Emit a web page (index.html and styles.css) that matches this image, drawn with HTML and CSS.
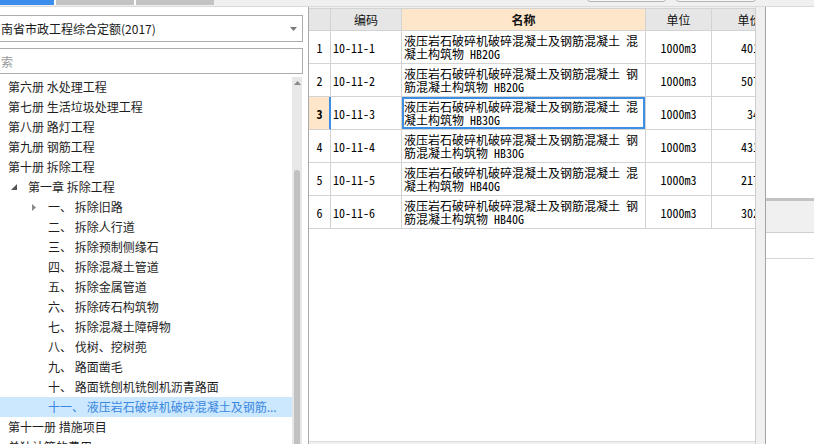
FILE: index.html
```html
<!DOCTYPE html>
<html lang="zh-CN">
<head>
<meta charset="utf-8">
<title>定额</title>
<link rel="stylesheet" href="styles.css">
</head>
<body>
<div class="topbar">
  <div class="tab tab-active"></div>
  <div class="tab-gap"></div>
  <div class="tab"></div>
  <div class="tab-gap"></div>
  <div class="tab"></div>
  <div class="top-btn top-btn-1"></div>
  <div class="top-btn top-btn-2"></div>
</div>
<div class="main">
  <div class="left">
    <div class="combo">
      <span class="combo-text">南省市政工程综合定额(2017)</span>
      <svg class="combo-arrow" width="7" height="4" viewBox="0 0 7 4"><path d="M0 0H7L3.5 4Z" fill="#7a7a7a"/></svg>
    </div>
    <div class="search"><span class="placeholder">索</span></div>
    <div class="tree">
      <div class="rows">
        <div class="row lv0">第六册 水处理工程</div>
        <div class="row lv0">第七册 生活垃圾处理工程</div>
        <div class="row lv0">第八册 路灯工程</div>
        <div class="row lv0">第九册 钢筋工程</div>
        <div class="row lv0">第十册 拆除工程</div>
        <div class="row lv1"><span class="ico"><svg width="6" height="6" viewBox="0 0 6 6"><path d="M6 0V6H0Z" fill="#555"/></svg></span>第一章 拆除工程</div>
        <div class="row lv2x"><span class="ico"><svg width="4" height="7" viewBox="0 0 4 7"><path d="M0 0L4 3.5L0 7Z" fill="#8a8a8a"/></svg></span>一、 拆除旧路</div>
        <div class="row lv2">二、 拆除人行道</div>
        <div class="row lv2">三、 拆除预制侧缘石</div>
        <div class="row lv2">四、 拆除混凝土管道</div>
        <div class="row lv2">五、 拆除金属管道</div>
        <div class="row lv2">六、 拆除砖石构筑物</div>
        <div class="row lv2">七、 拆除混凝土障碍物</div>
        <div class="row lv2">八、 伐树、挖树蔸</div>
        <div class="row lv2">九、 路面凿毛</div>
        <div class="row lv2">十、 路面铣刨机铣刨机沥青路面</div>
        <div class="row lv2 selected">十一、 液压岩石破碎机破碎混凝土及钢筋...</div>
        <div class="row lv0">第十一册 措施项目</div>
        <div class="row lv0">单独计算的费用</div>
      </div>
      <div class="vscroll">
        <div class="vs-arrow"><svg width="7" height="4" viewBox="0 0 7 4"><path d="M0 4H7L3.5 0Z" fill="#8a8a8a"/></svg></div>
        <div class="vs-thumb"></div>
      </div>
    </div>
  </div>
  <div class="grid">
    <div class="table">
      <div class="trow thead">
        <div class="cell rn"></div>
        <div class="cell c">编码</div>
        <div class="cell c name-h">名称</div>
        <div class="cell c">单位</div>
        <div class="cell c">单价</div>
      </div>
      <div class="trow">
        <div class="cell rn">1</div>
        <div class="cell code">10-11-1</div>
        <div class="cell name">液压岩石破碎机破碎混凝土及钢筋混凝土 混<br>凝土构筑物 HB20G</div>
        <div class="cell unit">1000m3</div>
        <div class="cell price">4013.52</div>
      </div>
      <div class="trow">
        <div class="cell rn">2</div>
        <div class="cell code">10-11-2</div>
        <div class="cell name">液压岩石破碎机破碎混凝土及钢筋混凝土 钢<br>筋混凝土构筑物 HB20G</div>
        <div class="cell unit">1000m3</div>
        <div class="cell price">5078.64</div>
      </div>
      <div class="trow current">
        <div class="cell rn">3</div>
        <div class="cell code">10-11-3</div>
        <div class="cell name focus">液压岩石破碎机破碎混凝土及钢筋混凝土 混<br>凝土构筑物 HB30G</div>
        <div class="cell unit">1000m3</div>
        <div class="cell price">347.21</div>
      </div>
      <div class="trow">
        <div class="cell rn">4</div>
        <div class="cell code">10-11-4</div>
        <div class="cell name">液压岩石破碎机破碎混凝土及钢筋混凝土 钢<br>筋混凝土构筑物 HB30G</div>
        <div class="cell unit">1000m3</div>
        <div class="cell price">4316.05</div>
      </div>
      <div class="trow">
        <div class="cell rn">5</div>
        <div class="cell code">10-11-5</div>
        <div class="cell name">液压岩石破碎机破碎混凝土及钢筋混凝土 混<br>凝土构筑物 HB40G</div>
        <div class="cell unit">1000m3</div>
        <div class="cell price">2174.38</div>
      </div>
      <div class="trow">
        <div class="cell rn">6</div>
        <div class="cell code">10-11-6</div>
        <div class="cell name">液压岩石破碎机破碎混凝土及钢筋混凝土 钢<br>筋混凝土构筑物 HB40G</div>
        <div class="cell unit">1000m3</div>
        <div class="cell price">3025.97</div>
      </div>
    </div>
    <div class="hscroll"></div>
  </div>
  <div class="gutter"></div>
  <div class="right">
    <div class="right-top"></div>
    <div class="right-bar"></div>
    <div class="right-band"></div>
    <div class="right-band2"></div>
    <div class="right-rest"></div>
  </div>
</div>
</body>
</html>
```
FILE: styles.css
```css
* { box-sizing: border-box; margin: 0; padding: 0; }
html, body { width: 814px; height: 444px; overflow: hidden; }
body {
  background: #f0f0f0;
  font-family: "Noto Sans CJK SC", "Microsoft YaHei", sans-serif;
  font-size: 12px;
  color: #1e1e1e;
}

/* top strip */
.topbar {
  height: 7px;
  display: flex;
  align-items: flex-start;
  background: #f0f0f0;
  border-bottom: 1px solid #dadada;
}
.tab { width: 78px; height: 5px; background: #c3c3c3; }
.tab-active { width: 54px; background: #3c8eec; }
.tab-gap { width: 2px; height: 5px; background: #fff; }
.top-btn {
  height: 6px;
  margin-top: -4px;
  border: 1px solid #b4b4b4;
  border-radius: 3px;
  background: #f7f7f7;
}
.top-btn-1 { width: 79px; margin-left: 373px; }
.top-btn-2 { width: 80px; margin-left: 10px; }

.main { display: flex; height: 437px; }

/* left panel */
.left {
  width: 308px;
  background: #fff;
  display: flex;
  flex-direction: column;
  overflow: hidden;
}
.combo {
  margin: 8px 0 0 -1px;
  width: 304px;
  height: 27px;
  border: 1px solid #acacac;
  display: flex;
  align-items: center;
  justify-content: space-between;
  padding: 0 5px 0 1px;
}
.combo-text { color: #1a1a1a; font-size: 12px; }
.search {
  margin: 6px 0 0 -1px;
  width: 304px;
  height: 26px;
  border: 1px solid #acacac;
  display: flex;
  align-items: center;
  padding-left: 1px;
}
.placeholder { color: #9a9a9a; }

.tree { margin-top: 3px; flex: 1; display: flex; min-height: 0; }
.rows { width: 292px; overflow: hidden; }
.row {
  height: 20px;
  line-height: 20px;
  white-space: nowrap;
  display: flex;
  align-items: center;
  color: #1e1e1e;
}
.lv0 { padding-left: 8px; }
.lv1 { padding-left: 11px; }
.lv2x { padding-left: 32px; }
.lv2 { padding-left: 48px; }
.lv1 .ico { width: 17px; display: flex; align-items: center; }
.lv2x .ico { width: 16px; display: flex; align-items: center; }
.selected { background: #cce8ff; color: #3a87e0; }

.vscroll {
  width: 10px;
  background: #e8e8e8;
  display: flex;
  flex-direction: column;
  align-items: center;
}
.vs-arrow { height: 12px; display: flex; align-items: center; justify-content: center; }
.vs-thumb {
  margin-top: 81px;
  flex: 1;
  width: 6px;
  background: #c1c1c1;
  border-radius: 3px 3px 0 0;
}

/* grid */
.grid {
  width: 448px;
  border-left: 1px solid #a9a9a9;
  border-right: 1px solid #cfcfcf;
  display: flex;
  flex-direction: column;
  padding-top: 1px;
  background: #f0f0f0;
}
.table { flex: 1; background: #fff; overflow: hidden; }
.hscroll { height: 3px; border-top: 1px solid #dcdcdc; background: #f0f0f0; }
.trow {
  display: grid;
  grid-template-columns: 22px 71px 244px 66px 76px;
  width: 479px;
  height: 33px;
  font-family: "Noto Sans Mono CJK SC", "Noto Sans CJK SC", monospace;
  font-size: 12px;
  color: #000;
}
.cell {
  border-right: 1px solid #d3d3d3;
  border-bottom: 1px solid #d3d3d3;
  display: flex;
  align-items: center;
  overflow: hidden;
  white-space: nowrap;
}
.thead { height: 23px; background: #e6e6e6; font-family: "Noto Sans CJK SC", sans-serif; color: #111; }
.thead .cell { border-top: 1px solid #d3d3d3; }
.c { justify-content: center; }
.name-h { background: #fde6c9; font-weight: bold; }
.rn { justify-content: center; }
.code { padding-left: 2px; }
.name { padding-left: 2px; line-height: 13px; }
.unit { justify-content: center; }
.price { justify-content: flex-end; padding-right: 4px; }
.current .rn {
  background: #fde6c9;
  font-weight: bold;
  border-right: 1px solid #3d8fe6;
  box-shadow: inset -1px 0 0 #3d8fe6;
}
.focus { box-shadow: inset 0 0 0 2px #3d8fe6; }

.gutter {
  width: 10px;
  background: #f0f0f0;
  border-right: 1px solid #a3a3a3;
}

/* right panel */
.right { flex: 1; display: flex; flex-direction: column; }
.right-top { height: 191px; background: #fff; }
.right-bar { height: 3px; background: #c3c3c3; }
.right-band { height: 32px; background: #f0f0f0; border-bottom: 1px solid #cfcfcf; }
.right-band2 { height: 26px; background: #fff; border-bottom: 1px solid #d6d6d6; }
.right-rest { flex: 1; background: #fff; }
```
